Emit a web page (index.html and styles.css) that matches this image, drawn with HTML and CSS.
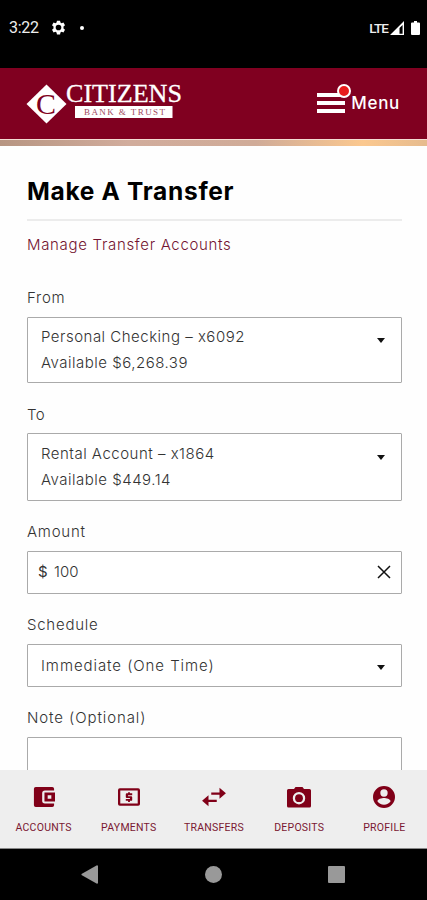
FILE: index.html
```html
<!DOCTYPE html>
<html lang="en">
<head>
  <meta charset="UTF-8">
  <meta name="viewport" content="width=device-width, initial-scale=1.0">
  <title>Make A Transfer</title>
  <link rel="stylesheet" href="styles.css">
</head>
<body>

  <div class="status-bar">
    <span class="time">3:22</span>
    <svg class="gear" viewBox="0 0 24 24"><path fill-rule="evenodd" d="M9.500 1h5l.6 3.100 1.800 1 3-1.100 2.500 4.300-2.400 2.100v3.200l2.400 2.100-2.500 4.300-3-1.100-1.800 1-.6 3.100h-5l-.6-3.100-1.800-1-3 1.100-2.500-4.300L4 13.600v-3.200L1.600 8.300 4.100 4l3 1.100 1.800-1zM12 7.500a4.500 4.500 0 1 0 0 9 4.500 4.500 0 0 0 0-9z"/></svg>
    <span class="dot"></span>
    <span class="lte">LTE</span>
    <svg class="signal" viewBox="0 0 14 14"><path fill-rule="evenodd" d="M14 0v14H0zM12.600 4L9.500 7v5.700h3.100z"/></svg>
    <svg class="battery" viewBox="0 0 9 14"><path d="M3 0h3v1.500h2q1 0 1 1V13q0 1-1 1H1q-1 0-1-1V2.500q0-1 1-1h2z"/></svg>
  </div>

  <header class="header">
    <svg class="logo" width="160" height="56" viewBox="0 -6 160 56">
      <path class="diamond" d="M20.500 2.500L40.500 22 20.500 41.500 0.500 22z"/>
      <text class="logo-c" x="10" y="31.500" textLength="20" lengthAdjust="spacingAndGlyphs">C</text>
      <text class="logo-name" x="40" y="20" textLength="116" lengthAdjust="spacingAndGlyphs">CITIZENS</text>
      <rect x="49" y="24" width="97.500" height="12" fill="#fff"/>
      <text class="logo-sub" x="58" y="33.300" textLength="81">BANK &amp; TRUST</text>
    </svg>
    <div class="menu">
      <div class="burger">
        <span></span><span></span><span></span>
        <i class="badge"></i>
      </div>
      <span class="menu-text">Menu</span>
    </div>
  </header>
  <div class="stripe"></div>

  <main class="content">
    <h1>Make A Transfer</h1>
    <a class="manage">Manage Transfer Accounts</a>

    <div class="field">
      <label>From</label>
      <div class="box account-box from-box">
        <div class="account">
          <span>Personal Checking – x6092</span>
          <span>Available $6,268.39</span>
        </div>
        <svg class="arrow" viewBox="0 0 8 5"><path d="M0 0h8L4 5z"/></svg>
      </div>
    </div>

    <div class="field">
      <label class="to">To</label>
      <div class="box account-box to-box">
        <div class="account">
          <span>Rental Account – x1864</span>
          <span>Available $449.14</span>
        </div>
        <svg class="arrow" viewBox="0 0 8 5"><path d="M0 0h8L4 5z"/></svg>
      </div>
    </div>

    <div class="field">
      <label>Amount</label>
      <div class="box amount-box">
        <span class="currency">$</span>
        <span class="amount">100</span>
        <svg class="clear" viewBox="0 0 14 14"><path d="M1 1l12 12M13 1L1 13"/></svg>
      </div>
    </div>

    <div class="field">
      <label>Schedule</label>
      <div class="box schedule-box">
        <span class="schedule">Immediate (One Time)</span>
        <svg class="arrow" viewBox="0 0 8 5"><path d="M0 0h8L4 5z"/></svg>
      </div>
    </div>

    <div class="field">
      <label class="note">Note (Optional)</label>
      <div class="box"></div>
    </div>
  </main>

  <nav class="tabs">
    <div class="tab">
      <svg viewBox="0 0 24 24"><path fill-rule="evenodd" d="M3 1h18a2 2 0 0 1 2 2v2H13a3 3 0 0 0-3 3v8a3 3 0 0 0 3 3h10v2a2 2 0 0 1-2 2H3a2 2 0 0 1-2-2V3a2 2 0 0 1 2-2zM12.500 7H24v10H12.500zM16 10v4h4v-4z"/></svg>
      <span>ACCOUNTS</span>
    </div>
    <div class="tab">
      <svg viewBox="0 0 24 24"><path fill-rule="evenodd" d="M2 2.500h20q2 0 2 2v15q0 2-2 2H2q-2 0-2-2v-15q0-2 2-2zM2.500 5v14h19V5z"/><path d="M11 6.800h2V8h2.500v2H11v1.200h3.500q1 0 1 1v3q0 1-1 1H13v1.200h-2v-1.200H8.500v-2H13V13H9.500q-1 0-1-1V9q0-1 1-1H11z"/></svg>
      <span>PAYMENTS</span>
    </div>
    <div class="tab">
      <svg class="swap" viewBox="0 0 26 24"><path d="M19 2l7 6-7 6V9.500h-9V7h9zM7 10l-7 6 7 6v-4.500h9V15H7z"/></svg>
      <span>TRANSFERS</span>
    </div>
    <div class="tab">
      <svg class="camera" viewBox="0 0 24 22"><path fill-rule="evenodd" d="M8.500 1h7l1.500 2h5.500q1.500 0 1.500 1.500V20q0 1.500-1.500 1.500h-21Q0 21.500 0 20V4.500Q0 3 1.500 3H7zM12 6a6.200 6.200 0 1 0 0 12.400A6.200 6.200 0 0 0 12 6z"/><circle cx="12" cy="12.200" r="3.900"/></svg>
      <span>DEPOSITS</span>
    </div>
    <div class="tab">
      <svg viewBox="0 0 24 24"><path fill-rule="evenodd" d="M12 0a12 12 0 1 0 0 24 12 12 0 0 0 0-24zM12 3.600a4 4 0 1 1 0 8 4 4 0 0 1 0-8zM12 20.500c-3 0-5.600-1.500-7.200-3.800 0-2.400 4.800-3.700 7.200-3.700s7.200 1.300 7.200 3.700A8.700 8.700 0 0 1 12 20.500z"/></svg>
      <span>PROFILE</span>
    </div>
  </nav>

  <div class="system-bar">
    <svg width="17" height="19" viewBox="0 0 17 19"><path d="M17 1v17q-.5 1-1.500.5L.5 10v-1L15.500.5q1-.5 1.500.5z"/></svg>
    <svg width="17" height="17" viewBox="0 0 17 17"><circle cx="8.500" cy="8.500" r="8.500"/></svg>
    <svg width="17" height="17" viewBox="0 0 17 17"><rect width="17" height="17" rx="1"/></svg>
  </div>

</body>
</html>
```

FILE: styles.css
```css
* {
  box-sizing: border-box;
}
body {
  margin: 0;
  height: 900px;
  display: flex;
  flex-direction: column;
  overflow: hidden;
  background: #fefefe;
  font-family: Inter, "Open Sans", sans-serif;
  font-size: 15px;
  color: #333;
}

/* phone status bar */
.status-bar {
  flex: none;
  height: 68px;
  padding: 0 7px 13px 9px;
  display: flex;
  align-items: center;
  background: #000;
  color: #eee;
  font-family: Roboto, sans-serif;
}
.status-bar svg {
  fill: #fff;
}
.time {
  width: 42px;
  font-size: 16px;
  letter-spacing: -0.3px;
}
.gear {
  width: 15px;
  height: 15px;
}
.dot {
  width: 4px;
  height: 4px;
  margin-left: 14px;
  border-radius: 50%;
  background: #fff;
}
.lte {
  margin-left: auto;
  font-size: 13.5px;
  font-weight: 500;
  letter-spacing: -0.9px;
}
.signal {
  width: 14px;
  height: 14px;
  margin-left: 2px;
}
.battery {
  width: 9px;
  height: 14px;
  margin-left: 7px;
}

/* header */
.header {
  flex: none;
  height: 71px;
  padding: 0 27px 0 26px;
  display: flex;
  align-items: center;
  justify-content: space-between;
  background: #800020;
}
.logo {
  display: block;
}
.diamond {
  fill: #fff;
}
.logo text {
  font-family: "Liberation Serif", serif;
  fill: #fff;
}
.logo .logo-c {
  font-size: 29px;
  fill: #800020;
}
.logo .logo-name {
  font-size: 25px;
  stroke: #fff;
  stroke-width: 0.3px;
}
.logo .logo-sub {
  font-size: 9px;
  fill: #a04a60;
}
.menu {
  display: flex;
  align-items: center;
  padding-bottom: 2px;
}
.burger {
  position: relative;
  width: 28px;
  display: flex;
  flex-direction: column;
  gap: 4px;
}
.burger span {
  height: 4px;
  background: #fff;
}
.badge {
  position: absolute;
  top: -9px;
  right: -6px;
  width: 14px;
  height: 14px;
  border: 2px solid #fff;
  border-radius: 50%;
  background: #e81c1c;
}
.menu-text {
  margin-left: 6px;
  font-size: 17px;
  font-weight: 500;
  letter-spacing: 0.7px;
  color: #fff;
}
.stripe {
  flex: none;
  height: 7px;
  border-top: 1px solid #f3dcd3;
  background: linear-gradient(90deg, #b79582, #d1ac9c 30%, #d0ab98 60%, #fbc88f 85%, #e6bb8e);
}

/* form */
.content {
  flex: 1;
  min-height: 0;
  overflow: hidden;
  padding: 0 25px 0 27px;
}
h1 {
  height: 75px;
  margin: 0;
  padding-top: 14px;
  border-bottom: 2px solid #ececec;
  font-size: 24.5px;
  line-height: 62px;
  font-weight: 700;
  letter-spacing: 0.7px;
  color: #000;
}
h1, label, .box, .manage {
  white-space: nowrap;
}
.manage {
  display: block;
  height: 62px;
  line-height: 47px;
  letter-spacing: 0.68px;
  font-weight: 300;
  color: #741431;
}
.field {
  margin-bottom: 16px;
  font-weight: 300;
  letter-spacing: 0.5px;
}
label {
  display: block;
  height: 34px;
  line-height: 30px;
  letter-spacing: 0.75px;
}
.to {
  line-height: 32px;
  letter-spacing: 0.3px;
}
.note {
  letter-spacing: 0.9px;
}
.box {
  height: 43px;
  padding: 0 16px 0 13px;
  display: flex;
  align-items: center;
  justify-content: space-between;
  border: 1px solid #aaa;
  border-radius: 1px;
  background: #fff;
}
.account-box {
  align-items: flex-start;
  padding-top: 6px;
}
.from-box {
  height: 66px;
}
.to-box {
  height: 68px;
  padding-top: 7px;
}
.account span {
  display: block;
  line-height: 26px;
}
.arrow {
  width: 8px;
  height: 5px;
  fill: #111;
}
.account-box .arrow {
  margin-top: 14px;
}
.schedule-box .arrow {
  margin-top: 4px;
}
.schedule {
  letter-spacing: 0.93px;
}
.amount-box {
  padding: 0 10px 2px;
  justify-content: flex-start;
}
.currency {
  width: 16px;
  font-weight: 400;
}
.amount {
  letter-spacing: 0;
}
.clear {
  width: 14px;
  height: 14px;
  margin-left: auto;
  fill: none;
  stroke: #111;
  stroke-width: 1.5px;
}

/* bottom tabs */
.tabs {
  flex: none;
  height: 79px;
  padding: 16px 0 0 1px;
  display: grid;
  grid-template-columns: repeat(5, 1fr);
  background: #eee;
  border-bottom: 1px solid #888;
}
.tab {
  display: flex;
  flex-direction: column;
  align-items: center;
  font-family: Roboto, sans-serif;
  font-size: 10.5px;
  letter-spacing: 0.25px;
  color: #7a1832;
}
.tab svg {
  width: 22px;
  height: 22px;
  margin-bottom: 13px;
  fill: #800018;
}
.tab .swap {
  width: 26px;
}
.tab .camera {
  width: 24px;
}

/* android navigation */
.system-bar {
  flex: none;
  height: 51px;
  padding: 0 82px 0 81px;
  display: flex;
  align-items: center;
  justify-content: space-between;
  background: #000;
}
.system-bar svg {
  fill: #999;
}
```
